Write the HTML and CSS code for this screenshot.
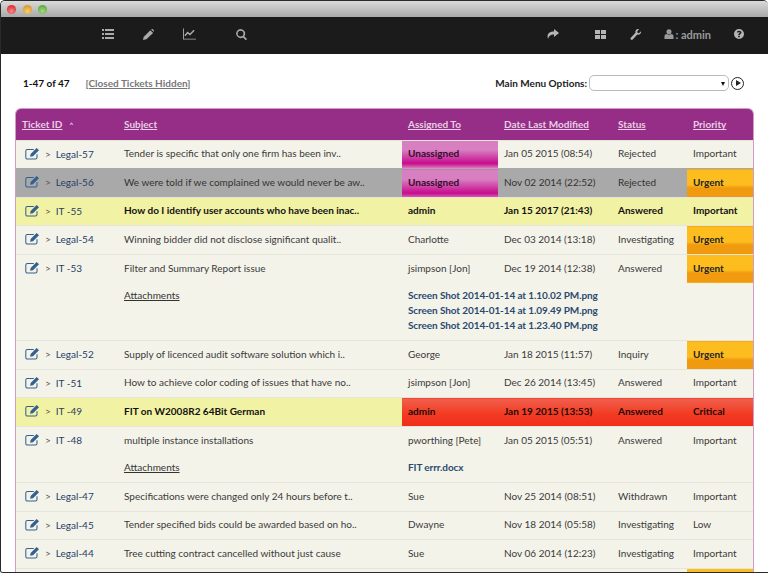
FILE: index.html
```html
<!DOCTYPE html>
<html lang="en">
<head>
    <meta charset="UTF-8">
    <meta name="viewport" content="width=device-width, initial-scale=1.0">
    <title>Ticket List</title>
    <link rel="stylesheet" href="styles.css">
</head>
<body>
    <svg class="defs" width="0" height="0">
        <symbol id="edit" viewBox="0 0 20 16">
            <path d="M15 9v4a2 2 0 0 1-2 2H3a2 2 0 0 1-2-2V5a2 2 0 0 1 2-2h8" fill="none" stroke="currentColor" stroke-width="1.300"/>
            <path d="M7 8.500 14.500 1l3 3L10 11.500l-3.600.6z" fill="currentColor"/>
        </symbol>
    </svg>

    <div class="window">
        <div class="titlebar">
            <span class="light red"></span>
            <span class="light amber"></span>
            <span class="light green"></span>
        </div>

        <nav class="navbar">
            <div class="nav-left">
                <svg class="nav-icon list" viewBox="0 0 12 10"><path d="M0 0h2v2H0zM3 0h9v2H3zM0 4h2v2H0zM3 4h9v2H3zM0 8h2v2H0zM3 8h9v2H3z"/></svg>
                <svg class="nav-icon pencil" viewBox="0 0 12 12"><path d="M0 12l.7-3.300L8 1.400l3 3-7.300 6.900zM9 .5l.5-.5q.5-.4 1 0l1.500 1.500q.4.5 0 1l-.5.500z"/></svg>
                <svg class="nav-icon chart" viewBox="0 0 14 12"><path d="M0 0h1v11h13v1H0z"/><path d="M2 8l3-3.500 2.500 2L12 2" fill="none" stroke="currentColor" stroke-width="1.600"/></svg>
                <svg class="nav-icon search" viewBox="0 0 12 12"><path d="M5 0a5 5 0 0 1 4 8l3 3-1.300 1.300-3-3A5 5 0 1 1 5 0zm0 1.800a3.200 3.200 0 1 0 0 6.400 3.200 3.200 0 0 0 0-6.400z"/></svg>
            </div>
            <div class="nav-right">
                <svg class="nav-icon share" viewBox="0 0 12 10"><path d="M7 0l5 4-5 4V5.500C4 5.500 2 6.500 1 10-.500 5 2 2.500 7 2.500z"/></svg>
                <svg class="nav-icon grid" viewBox="0 0 11 9"><path d="M0 0h5v4H0zM6 0h5v4H6zM0 5h5v4H0zM6 5h5v4H6z"/></svg>
                <svg class="nav-icon wrench" viewBox="0 0 12 12"><path d="M8.500 0q1 0 1.500.4L7.800 2.600l.4 1.600 1.600.4L12 2.400q.3 2-1 3.100-1.200 1-3 .6L3 11.500q-1 .9-2 0t-.1-2L6 4.200Q5.500 2.300 6.600 1 7.400 0 8.500 0z"/></svg>
                <span class="nav-user">
                    <svg class="nav-icon user" viewBox="0 0 10 11"><circle cx="5" cy="3" r="2.800"/><path d="M0 11V8q0-2 2-2.500 3 1.500 6 0Q10 6 10 8v3z"/></svg>
                    : admin
                </span>
                <svg class="nav-icon help" viewBox="0 0 12 12"><path fill-rule="evenodd" d="M6 0a6 6 0 1 1 0 12A6 6 0 0 1 6 0zM5 8.500V10h2V8.500zM6 2C4.500 2 3.500 2.800 3.300 4l1.700.4C5.100 3.800 5.400 3.500 6 3.500s.9.300.9.700c0 .9-1.900 1.100-1.900 3.300h2c0-1.400 2-1.600 2-3.500C9 2.900 7.700 2 6 2z"/></svg>
            </div>
        </nav>

        <main class="content">
            <div class="toolbar">
                <div class="count">
                    <b>1-47 of 47</b>
                    <a class="hidden-link" href="#">[Closed Tickets Hidden]</a>
                </div>
                <div class="menu-options">
                    <label for="menu">Main Menu Options:</label>
                    <span class="select-wrap"><select id="menu"><option></option></select></span>
                    <span class="go"></span>
                </div>
            </div>

            <div class="table-box">
                <table class="tickets">
                    <thead>
                        <tr>
                            <th class="col-id"><a href="#">Ticket ID</a><span class="sort">&#708;</span></th>
                            <th class="col-subject"><a href="#">Subject</a></th>
                            <th class="col-assigned"><a href="#">Assigned To</a></th>
                            <th class="col-date"><a href="#">Date Last Modified</a></th>
                            <th class="col-status"><a href="#">Status</a></th>
                            <th class="col-priority"><a href="#">Priority</a></th>
                        </tr>
                    </thead>
                    <tbody>
                        <tr>
                            <td class="id"><svg class="edit"><use href="#edit"/></svg><span class="chev">&gt;</span><a href="#">Legal-57</a></td>
                            <td>Tender is specific that only one firm has been inv..</td>
                            <td class="unassigned">Unassigned</td>
                            <td>Jan 05 2015 (08:54)</td>
                            <td>Rejected</td>
                            <td>Important</td>
                        </tr>
                        <tr class="grey">
                            <td class="id"><svg class="edit"><use href="#edit"/></svg><span class="chev">&gt;</span><a href="#">Legal-56</a></td>
                            <td>We were told if we complained we would never be aw..</td>
                            <td class="unassigned">Unassigned</td>
                            <td>Nov 02 2014 (22:52)</td>
                            <td>Rejected</td>
                            <td class="urgent">Urgent</td>
                        </tr>
                        <tr class="yellow">
                            <td class="id"><svg class="edit"><use href="#edit"/></svg><span class="chev">&gt;</span><a href="#">IT -55</a></td>
                            <td>How do I identify user accounts who have been inac..</td>
                            <td>admin</td>
                            <td>Jan 15 2017 (21:43)</td>
                            <td>Answered</td>
                            <td>Important</td>
                        </tr>
                        <tr>
                            <td class="id"><svg class="edit"><use href="#edit"/></svg><span class="chev">&gt;</span><a href="#">Legal-54</a></td>
                            <td>Winning bidder did not disclose significant qualit..</td>
                            <td>Charlotte</td>
                            <td>Dec 03 2014 (13:18)</td>
                            <td>Investigating</td>
                            <td class="urgent">Urgent</td>
                        </tr>
                        <tr>
                            <td class="id"><svg class="edit"><use href="#edit"/></svg><span class="chev">&gt;</span><a href="#">IT -53</a></td>
                            <td>Filter and Summary Report issue</td>
                            <td>jsimpson [Jon]</td>
                            <td>Dec 19 2014 (12:38)</td>
                            <td>Answered</td>
                            <td class="urgent">Urgent</td>
                        </tr>
                        <tr class="files three">
                            <td></td>
                            <td class="attach-label"><u>Attachments</u></td>
                            <td colspan="4" class="attach-list">
                                <a href="#">Screen Shot 2014-01-14 at 1.10.02 PM.png</a>
                                <a href="#">Screen Shot 2014-01-14 at 1.09.49 PM.png</a>
                                <a href="#">Screen Shot 2014-01-14 at 1.23.40 PM.png</a>
                            </td>
                        </tr>
                        <tr>
                            <td class="id"><svg class="edit"><use href="#edit"/></svg><span class="chev">&gt;</span><a href="#">Legal-52</a></td>
                            <td>Supply of licenced audit software solution which i..</td>
                            <td>George</td>
                            <td>Jan 18 2015 (11:57)</td>
                            <td>Inquiry</td>
                            <td class="urgent">Urgent</td>
                        </tr>
                        <tr>
                            <td class="id"><svg class="edit"><use href="#edit"/></svg><span class="chev">&gt;</span><a href="#">IT -51</a></td>
                            <td>How to achieve color coding of issues that have no..</td>
                            <td>jsimpson [Jon]</td>
                            <td>Dec 26 2014 (13:45)</td>
                            <td>Answered</td>
                            <td>Important</td>
                        </tr>
                        <tr class="yellow">
                            <td class="id"><svg class="edit"><use href="#edit"/></svg><span class="chev">&gt;</span><a href="#">IT -49</a></td>
                            <td>FIT on W2008R2 64Bit German</td>
                            <td class="red">admin</td>
                            <td class="red">Jan 19 2015 (13:53)</td>
                            <td class="red">Answered</td>
                            <td class="red">Critical</td>
                        </tr>
                        <tr>
                            <td class="id"><svg class="edit"><use href="#edit"/></svg><span class="chev">&gt;</span><a href="#">IT -48</a></td>
                            <td>multiple instance installations</td>
                            <td>pworthing [Pete]</td>
                            <td>Jan 05 2015 (05:51)</td>
                            <td>Answered</td>
                            <td>Important</td>
                        </tr>
                        <tr class="files">
                            <td></td>
                            <td class="attach-label"><u>Attachments</u></td>
                            <td colspan="4" class="attach-list"><a href="#">FIT errr.docx</a></td>
                        </tr>
                        <tr>
                            <td class="id"><svg class="edit"><use href="#edit"/></svg><span class="chev">&gt;</span><a href="#">Legal-47</a></td>
                            <td>Specifications were changed only 24 hours before t..</td>
                            <td>Sue</td>
                            <td>Nov 25 2014 (08:51)</td>
                            <td>Withdrawn</td>
                            <td>Important</td>
                        </tr>
                        <tr>
                            <td class="id"><svg class="edit"><use href="#edit"/></svg><span class="chev">&gt;</span><a href="#">Legal-45</a></td>
                            <td>Tender specified bids could be awarded based on ho..</td>
                            <td>Dwayne</td>
                            <td>Nov 18 2014 (05:58)</td>
                            <td>Investigating</td>
                            <td>Low</td>
                        </tr>
                        <tr>
                            <td class="id"><svg class="edit"><use href="#edit"/></svg><span class="chev">&gt;</span><a href="#">Legal-44</a></td>
                            <td>Tree cutting contract cancelled without just cause</td>
                            <td>Sue</td>
                            <td>Nov 06 2014 (12:23)</td>
                            <td>Investigating</td>
                            <td>Important</td>
                        </tr>
                        <tr>
                            <td class="id"></td>
                            <td></td>
                            <td></td>
                            <td></td>
                            <td></td>
                            <td class="urgent"></td>
                        </tr>
                    </tbody>
                </table>
            </div>
        </main>
    </div>
</body>
</html>
```

FILE: styles.css
```css
html, body {
    margin: 0;
    height: 100%;
    overflow: hidden;
    background: #fff;
}

.defs {
    position: absolute;
}

.window {
    display: flex;
    flex-direction: column;
    box-sizing: border-box;
    height: 573px;
    overflow: hidden;
    border: 1px solid #2a2a2a;
    border-right: 0;
    border-top-left-radius: 5px;
    border-top-right-radius: 5px;
    border-bottom-left-radius: 3px;
    font-family: "Lato", "Open Sans", sans-serif;
    font-size: 10px;
    color: #333;
}

.titlebar {
    display: flex;
    flex: none;
    align-items: center;
    gap: 6.500px;
    height: 16px;
    padding: 1px 0 0 6px;
    box-sizing: border-box;
    background: linear-gradient(#dadada, #a9a9a9);
}

.light {
    width: 9px;
    height: 9px;
    border-radius: 50%;
}

.light.red { background: radial-gradient(circle at 50% 70%, #f58a8a, #dd3338 70%); }
.light.amber { background: radial-gradient(circle at 50% 70%, #f5cf7a, #e09a2c 70%); }
.light.green { background: radial-gradient(circle at 50% 70%, #a5dc86, #62ad42 70%); }

.navbar {
    display: flex;
    flex: none;
    justify-content: space-between;
    align-items: center;
    box-sizing: border-box;
    height: 37px;
    padding-bottom: 3px;
    background: #1b1b1b;
    color: #aaa;
}

.nav-left, .nav-right {
    display: flex;
    align-items: center;
}

.nav-left {
    padding-left: 101px;
}

.nav-right {
    padding-right: 24px;
    color: #b5b5b5;
}

.nav-icon {
    fill: currentColor;
}

.list { width: 12px; height: 10px; }
.pencil { width: 11px; height: 11px; margin-left: 29px; }
.chart { width: 13px; height: 12px; margin-left: 29px; }
.search { width: 11px; height: 11px; margin-left: 40px; }
.share { width: 12px; height: 10px; }
.grid { width: 11px; height: 9px; margin-left: 36px; }
.wrench { width: 11px; height: 11px; margin-left: 24px; }
.user { width: 10px; height: 10px; }
.help { width: 10px; height: 10px; margin-left: 23px; }

.nav-user {
    display: flex;
    align-items: center;
    gap: 1px;
    margin-left: 23px;
    font-size: 11px;
    font-weight: 700;
    color: #9a9a9a;
}

.content {
    flex: 1;
    min-height: 0;
    background: #fff;
}

.toolbar {
    display: flex;
    justify-content: space-between;
    align-items: center;
    height: 22px;
    padding: 18px 24px 0 22px;
}

.count {
    display: flex;
    gap: 16px;
    color: #111;
}

.hidden-link {
    color: #777;
    font-weight: 700;
}

.menu-options {
    display: flex;
    align-items: center;
    gap: 2px;
    font-weight: 700;
    color: #222;
}

.select-wrap {
    position: relative;
    display: flex;
}

.select-wrap::after {
    content: "";
    position: absolute;
    top: 7px;
    right: 4px;
    border-top: 4px solid #111;
    border-left: 2.500px solid transparent;
    border-right: 2.500px solid transparent;
}

.select-wrap select {
    appearance: none;
    width: 140px;
    height: 16px;
    border: 1px solid #bbb;
    border-radius: 5px;
    background: #fff;
}

.go {
    position: relative;
    box-sizing: border-box;
    width: 13px;
    height: 13px;
    border: 1px solid #222;
    border-radius: 50%;
}

.go::after {
    content: "";
    position: absolute;
    top: 2px;
    left: 3.500px;
    border-left: 5px solid #222;
    border-top: 3.500px solid transparent;
    border-bottom: 3.500px solid transparent;
}

.table-box {
    width: 739px;
    margin: 14px 0 0 14px;
    box-sizing: border-box;
    border: 1px solid #d29cc8;
    border-bottom: 0;
    border-radius: 6px 6px 0 0;
    background: #f4f3ea;
    overflow: hidden;
}

.tickets {
    width: 737px;
    table-layout: fixed;
    border-collapse: collapse;
}

.tickets th {
    box-sizing: border-box;
    height: 31px;
    padding: 0 0 0 6px;
    background: #962d87;
    color: #e8cfe4;
    font-weight: 700;
    text-align: left;
}

.tickets th a {
    color: inherit;
}

.sort {
    margin-left: 7px;
    font-size: 8px;
}

.col-id { width: 102px; }
.col-subject { width: 284px; }
.col-assigned { width: 96px; }
.col-date { width: 114px; }
.col-status { width: 75px; }
.col-priority { width: 66px; }

.tickets td {
    box-sizing: border-box;
    height: 28.500px;
    padding: 0 0 2px 6px;
    border-top: 1px solid #e6e5dc;
    color: #3a3a3a;
    white-space: nowrap;
}

.tickets .id {
    padding-left: 9px;
}

.id a {
    color: #1f4068;
    text-decoration: none;
}

.edit {
    width: 16px;
    height: 13px;
    margin-right: 4px;
    color: #33608f;
    vertical-align: -2px;
}

.chev {
    margin-right: 5px;
    color: #555;
}

.tickets .grey td {
    background: #a9a9a9;
    border-top-color: #a9a9a9;
    color: #333;
}

.tickets .yellow td {
    background: #f2f2a4;
    font-weight: 700;
    color: #111;
}

.tickets .yellow .id {
    font-weight: 400;
}

.tickets td.unassigned {
    background: linear-gradient(#d77fc0 35%, #c80a8e 85%, #d86ab0);
    font-weight: 700;
    color: #30102c;
}

.tickets td.urgent {
    background: linear-gradient(#fdbd1e 55%, #f09a10 65%);
    font-weight: 700;
    color: #222;
}

.tickets td.red {
    background: linear-gradient(#f0604e, #f23b22 55%, #f22c18);
    color: #1e0a08;
}

.tickets .files td {
    height: 28px;
    border-top: 0;
    vertical-align: top;
    padding-top: 5px;
    padding-bottom: 0;
}

.tickets .three td {
    height: 58px;
}

.tickets .files .attach-label {
    padding-top: 6.500px;
}

.attach-label u {
    color: #333;
}

.attach-list a {
    display: block;
    height: 15px;
    line-height: 15px;
    letter-spacing: -0.1px;
    color: #2b4a70;
    font-weight: 700;
    text-decoration: none;
}
```
